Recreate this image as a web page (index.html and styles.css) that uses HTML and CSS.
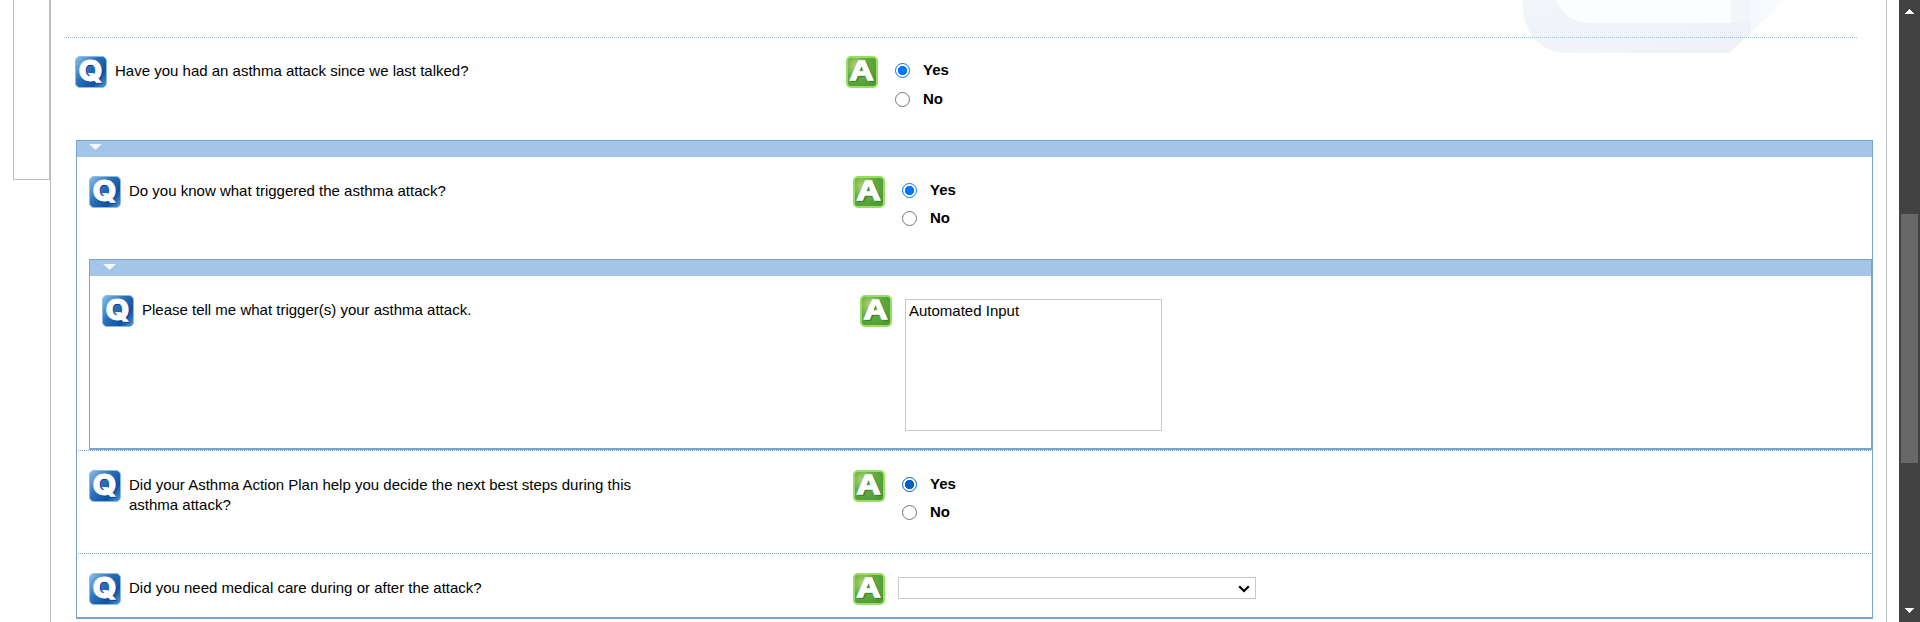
FILE: index.html
```html
<!DOCTYPE html>
<html lang="en">
<head>
<meta charset="utf-8">
<title>Asthma assessment</title>
<link rel="stylesheet" href="styles.css">
</head>
<body>
<svg class="defs" width="0" height="0" aria-hidden="true">
  <defs>
    <linearGradient id="blue" x1="0" y1="0" x2="1" y2="0.8"><stop offset="0" stop-color="#8fc0ec"/><stop offset="0.45" stop-color="#2a70ba"/><stop offset="0.8" stop-color="#0c55a4"/><stop offset="1" stop-color="#3c86c8"/></linearGradient>
    <radialGradient id="green" cx="0.3" cy="0.3" r="0.8"><stop offset="0" stop-color="#b9d374"/><stop offset="0.5" stop-color="#62ab40"/><stop offset="1" stop-color="#4c9a35"/></radialGradient>
    <symbol id="q" viewBox="0 0 32 32">
      <rect x="0.5" y="0.5" width="31" height="31" rx="4.5" fill="url(#blue)" stroke="#8dbbe2"/>
      <g transform="translate(15.6 25) scale(1.1 1)">
        <text class="glyph glyph-q glyph-q-shade" x="0.9" y="0.6" text-anchor="middle">Q</text>
        <text class="glyph glyph-q glyph-face" x="0" y="0" text-anchor="middle">Q</text>
      </g>
    </symbol>
    <symbol id="a" viewBox="0 0 32 32">
      <rect x="1" y="1" width="30" height="30" rx="4" fill="url(#green)" stroke="#98de62" stroke-width="2"/>
      <g transform="translate(15.5 24.3) scale(1.24 1)">
        <text class="glyph glyph-a-shade" x="1" y="1" text-anchor="middle">A</text>
        <text class="glyph glyph-face" x="0" y="0" text-anchor="middle">A</text>
      </g>
    </symbol>
    <linearGradient id="mark" x1="0" y1="0" x2="1" y2="0.5"><stop offset="0" stop-color="#f3f6f9"/><stop offset="0.3" stop-color="#f0f3f8"/><stop offset="0.6" stop-color="#f1f5f9"/><stop offset="1" stop-color="#eef2f7"/></linearGradient>
    <linearGradient id="tail" x1="0" y1="0" x2="1" y2="0"><stop offset="0" stop-color="#f5f9fd"/><stop offset="1" stop-color="#fafcfe"/></linearGradient>
  </defs>
</svg>
<div class="page">
  <aside class="side"></aside>
  <main class="main">
    <svg class="watermark" width="266" height="53" viewBox="0 0 266 53">
      <path d="M227 0H263L227 33Z" fill="url(#tail)"/>
      <path d="M0 0V10C2 36 20 52 43 53H206L228 33V0Z" fill="url(#mark)"/>
      <path d="M33 0C39 14 50 23 68 23H208V0Z" fill="#fbfdff"/>
      <path d="M208 0H228V23H208Z" fill="#f1f6fa"/>
    </svg>
    <hr class="rule">
    <section class="row row-first">
      <svg class="icon"><use href="#q"/></svg>
      <p class="question">Have you had an asthma attack since we last talked?</p>
      <svg class="icon"><use href="#a"/></svg>
      <div class="choices">
        <label class="choice"><input class="radio" type="radio" name="attack" checked><span>Yes</span></label>
        <label class="choice"><input class="radio" type="radio" name="attack"><span>No</span></label>
      </div>
    </section>
    <div class="group">
      <div class="bar"><i class="caret"></i></div>
      <section class="row row-trigger">
        <svg class="icon"><use href="#q"/></svg>
        <p class="question">Do you know what triggered the asthma attack?</p>
        <svg class="icon"><use href="#a"/></svg>
        <div class="choices">
          <label class="choice"><input class="radio" type="radio" name="trigger" checked><span>Yes</span></label>
          <label class="choice"><input class="radio" type="radio" name="trigger"><span>No</span></label>
        </div>
      </section>
      <div class="group group-inner">
        <div class="bar bar-inner"><i class="caret"></i></div>
        <section class="row row-inner">
          <svg class="icon"><use href="#q"/></svg>
          <p class="question">Please tell me what trigger(s) your asthma attack.</p>
          <svg class="icon"><use href="#a"/></svg>
          <textarea class="answer">Automated Input</textarea>
        </section>
      </div>
      <section class="row row-plan">
        <svg class="icon"><use href="#q"/></svg>
        <p class="question">Did your Asthma Action Plan help you decide the next best steps during this asthma attack?</p>
        <svg class="icon"><use href="#a"/></svg>
        <div class="choices">
          <label class="choice"><input class="radio radio-dark" type="radio" name="plan" checked><span>Yes</span></label>
          <label class="choice"><input class="radio" type="radio" name="plan"><span>No</span></label>
        </div>
      </section>
      <section class="row row-care">
        <svg class="icon"><use href="#q"/></svg>
        <p class="question">Did you need medical care during or after the attack?</p>
        <svg class="icon"><use href="#a"/></svg>
        <div class="select">
          <svg width="12" height="8" viewBox="0 0 12 8"><path d="M1.2 1.2L6 6L10.8 1.2" fill="none" stroke="#000" stroke-width="2.2"/></svg>
        </div>
      </section>
    </div>
  </main>
  <div class="scrollbar">
    <svg class="arrow" width="9" height="5" viewBox="0 0 9 5" shape-rendering="crispEdges"><path d="M4.5 0L9 5H0Z" fill="#fff"/></svg>
    <div class="thumb"></div>
    <svg class="arrow arrow-down" width="9" height="5" viewBox="0 0 9 5" shape-rendering="crispEdges"><path d="M0 0H9L4.5 5Z" fill="#fff"/></svg>
  </div>
</div>
</body>
</html>
```
FILE: styles.css
```css
* { box-sizing: border-box; }
body {
  margin: 0;
  overflow: hidden;
  background: #fff;
  color: #000;
  font: 15px/20px "Liberation Sans", Arial, sans-serif;
}
.defs { position: absolute; }
.page { display: flex; height: 622px; padding-left: 13px; }
.side { width: 37px; height: 180px; border: 1px solid #c0c0c0; border-top: 0; }
.main {
  position: relative;
  width: 1837px;
  height: 622px;
  margin-right: 12px;
  padding-top: 37px;
  border: solid #c0c0c0;
  border-width: 0 1px;
}
.watermark { position: absolute; left: 1472px; top: 0; }
.rule {
  position: relative;
  width: 1793px;
  height: 1px;
  margin: 0 0 0 13px;
  border: 0;
  border-top: 1px dotted #9cbfe0;
}
.row {
  display: grid;
  grid-template-columns: 40px 724px 45px auto;
  align-items: start;
  justify-content: start;
  padding-left: 12px;
}
.icon { display: block; width: 32px; height: 32px; }
.glyph { font: bold 27px "Liberation Sans", Arial, sans-serif; stroke-width: 1.3; stroke-linejoin: miter; }
.glyph-q { font: 800 28px Inter, sans-serif; stroke-width: 0.8; }
.glyph-face { fill: #fff; stroke: #fff; }
.glyph-q-shade { fill: #203c91; stroke: #203c91; }
.glyph-a-shade { fill: #347f2c; stroke: #347f2c; }
.question { width: 520px; margin: 5px 0 0; }
.choices { padding: 0 0 0 4px; font-weight: bold; }
.choice { display: flex; align-items: center; height: 28px; }
.radio {
  appearance: none;
  width: 15px;
  height: 15px;
  margin: 0 13px 0 0;
  border: 1px solid #767676;
  border-radius: 50%;
  background: #fff;
}
.radio:checked {
  border: 1.5px solid #0075ff;
  background: radial-gradient(circle, #0075ff 4.3px, #fff 5px);
}
.radio-dark:checked {
  border-color: #005cc8;
  background: radial-gradient(circle, #005cc8 4.3px, #fff 5px);
}
.row-first {
  grid-template-columns: 40px 731px 45px auto;
  height: 102px;
  padding: 18px 0 0 24px;
}
.row-first .choice + .choice { margin-top: 1px; }
.group {
  width: 1797px;
  height: 479px;
  margin-left: 25px;
  border: 1px solid #7ba2ca;
  border-bottom-width: 2px;
}
.bar { height: 16px; padding: 3px 0 0 12px; background: #a2c5e8; }
.bar-inner { padding: 4px 0 0 13px; }
.caret {
  display: block;
  width: 13px;
  height: 6px;
  background: #f0f7ff;
  clip-path: polygon(0 0, 100% 0, 50% 100%);
}
.row-trigger { height: 102px; padding-top: 19px; }
.group-inner { width: 1783px; height: 191px; margin-left: 12px; }
.row-inner { grid-template-columns: 40px 718px 45px auto; padding-top: 19px; }
.answer {
  width: 257px;
  height: 132px;
  margin-top: 4px;
  padding: 2px 3px;
  border: 1px solid #c8c8c8;
  background: #fff;
  color: #000;
  font: 15px/18px "Liberation Sans", Arial, sans-serif;
  resize: none;
}
.row-plan, .row-care { margin: 0 1px; border-top: 1px dotted #7ba2ca; padding-left: 11px; }
.row-plan { height: 103px; padding-top: 19px; }
.row-care { padding-top: 19px; }
.select {
  display: flex;
  align-items: center;
  justify-content: flex-end;
  width: 358px;
  height: 22px;
  margin-top: 4px;
  padding: 1px 5px 0 0;
  border: 1px solid #c8c8c8;
  background: #fff;
}
.scrollbar {
  display: flex;
  flex-direction: column;
  align-items: center;
  width: 21px;
  height: 622px;
  padding: 9px 1px 9px 0;
  background: #424242;
}
.arrow { display: block; flex: none; }
.arrow-down { margin-top: auto; }
.thumb { width: 17px; height: 249px; margin-top: 200px; background: #686868; }
```
